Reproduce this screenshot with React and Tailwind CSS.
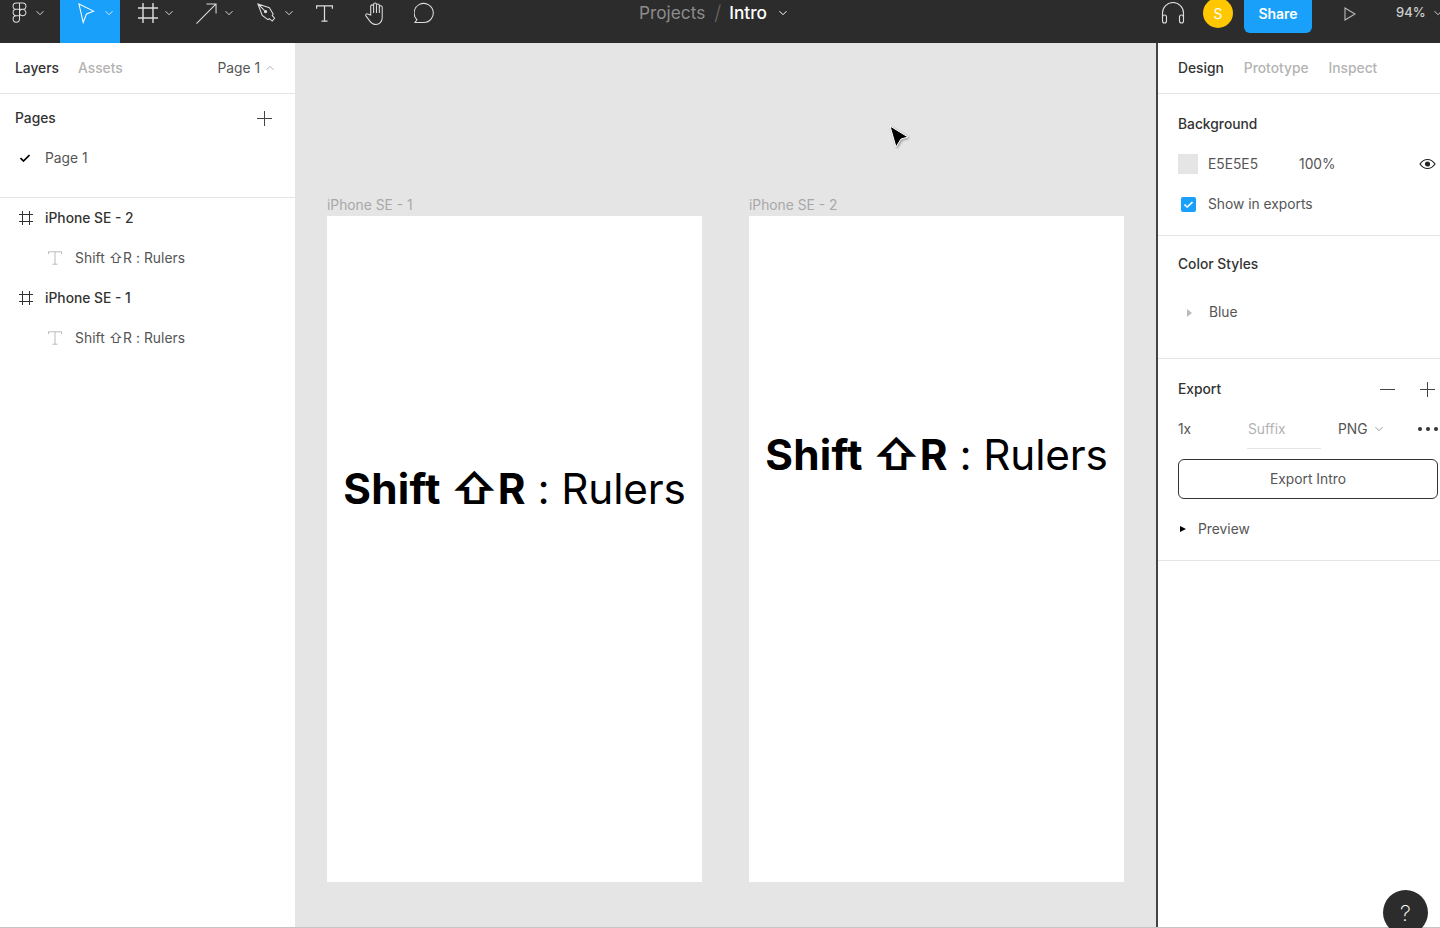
const Chevron = ({ className = 'text-white/80' }) => (
  <svg className={`w-2 h-2 shrink-0 ${className}`} viewBox="0 0 8 8" fill="none" stroke="currentColor" strokeWidth="1">
    <path d="M0.5 2.2 4 5.7 7.500 2.2" />
  </svg>
);

const FrameIcon = ({ className }) => (
  <svg className={className} viewBox="0 0 14 14" fill="none" stroke="currentColor" strokeWidth="1">
    <path d="M3.5 0v14M10.5 0v14M0 3.5h14M0 10.5h14" />
  </svg>
);

const TextIcon = ({ className }) => (
  <svg className={className} viewBox="0 0 14 14" fill="none" stroke="currentColor" strokeWidth="1">
    <path d="M.5 3V.8h13V3M7 .8v12.4M4.5 13.2h5" />
  </svg>
);

const Plus = ({ className = 'w-[15px] h-[15px] text-[#444]' }) => (
  <svg className={className} viewBox="0 0 15 15" fill="none" stroke="currentColor" strokeWidth="1">
    <path d="M7.5 0v15M0 7.5h15" />
  </svg>
);

const ToolButton = ({ className, active, children, chevron = true }) => (
  <div className={`h-full flex items-center pb-[17px] ${className} ${active ? 'bg-[#18a0fb]' : ''}`}>
    {children}
    {chevron && <Chevron className="text-white/80" />}
  </div>
);

const LayerRow = ({ name }) => (
  <>
    <div className="h-10 flex items-center pl-[19px] gap-[12px] text-[#333] font-medium">
      <FrameIcon className="w-[14px] h-[14px] text-[#333]" />
      <span>{name}</span>
    </div>
    <div className="h-10 flex items-center pl-[48px] gap-[13px] text-[#555]">
      <TextIcon className="w-[14px] h-[14px] text-[#bbb]" />
      <span className="tracking-[0.06px]">Shift ⇧R : Rulers</span>
    </div>
  </>
);

const Frame = ({ label, offset }) => (
  <div className="w-[375px] shrink-0">
    <div className="h-[20px] text-[#a8a8a8] text-[13.800px] leading-[18px]">{label}</div>
    <div className={`h-[666px] bg-white flex justify-center ${offset}`}>
      <div className="text-[42.300px] leading-[54px] text-black whitespace-nowrap tracking-[-0.15px]">
        <span className="font-bold tracking-[0.25px]">Shift ⇧R</span> : Rulers
      </div>
    </div>
  </div>
);

export default function App() {
  return (
    <div className="w-[1440px] h-[928px] overflow-hidden flex flex-col bg-white text-[13.800px] font-['Inter',sans-serif] relative">

      {/* Top bar */}
      <header className="h-[43px] shrink-0 bg-[#2c2c2c] flex items-center text-white">
        <ToolButton className="w-[60px] pl-[12px] gap-[9px]">
          <svg className="w-[15px] h-[22px] text-[#ddd]" viewBox="0 0 16 24" fill="none" stroke="currentColor" strokeWidth="1.1">
            <path d="M8 1H4.5a3.5 3.5 0 0 0 0 7H8zM8 1h3.5a3.5 3.5 0 0 1 0 7H8zM8 8H4.5a3.5 3.5 0 0 0 0 7H8zM8 11.5a3.5 3.5 0 1 0 7 0 3.5 3.5 0 0 0-7 0zM8 15H4.5A3.5 3.5 0 1 0 8 18.500z" />
          </svg>
        </ToolButton>
        <ToolButton active className="w-[60px] pl-[18px] gap-[10px]">
          <svg className="w-[17px] h-[21px] text-white" viewBox="0 0 18 22" fill="none" stroke="currentColor" strokeWidth="1.1">
            <path d="M1 1 16.5 8.5 9 11.5 5.5 20.5z" />
          </svg>
        </ToolButton>
        <ToolButton className="w-[60px] pl-[18px] gap-[7px]">
          <FrameIcon className="w-[20px] h-[20px] text-[#ddd]" />
        </ToolButton>
        <ToolButton className="w-[60px] pl-[16px] gap-[8px]">
          <svg className="w-[21px] h-[21px] text-[#ddd]" viewBox="0 0 22 22" fill="none" stroke="currentColor" strokeWidth="1.1">
            <path d="M.5 21.5 21 1M11 1h10v10" />
          </svg>
        </ToolButton>
        <ToolButton className="w-[60px] pl-[17px] gap-[9px]">
          <svg className="w-[19px] h-[20px] text-[#ddd]" viewBox="0 0 20 21" fill="none" stroke="currentColor" strokeWidth="1.1">
            <path d="M1 1 13 5l4 6.5-1 1.5 2.500 3-2.500 3-3-2.500-1.500 1L5.500 13zM1 1l7 7" />
            <circle cx="9" cy="9" r="1.200" fill="currentColor" />
          </svg>
        </ToolButton>
        <ToolButton className="w-[50px] pl-[16px]" chevron={false}>
          <TextIcon className="w-[17px] h-[17px] text-[#ddd]" />
        </ToolButton>
        <ToolButton className="w-[50px] pl-[14px]" chevron={false}>
          <svg className="w-[23px] h-[25px] text-[#ddd]" viewBox="0 0 24 25" fill="none" stroke="currentColor" strokeWidth="1.1">
            <path d="M7 14V5a1.500 1.500 0 0 1 3 0V3a1.500 1.500 0 0 1 3 0v1a1.500 1.500 0 0 1 3 0v2a1.500 1.500 0 0 1 3 0v11c0 4-3 7-6.500 7-3 0-4.500-1-6-3l-4.500-6c-1-1.500 1-3 2.500-1.800z" />
            <path d="M10 5v7M13 4v8M16 5v7" />
          </svg>
        </ToolButton>
        <ToolButton className="w-[50px] pl-[14px]" chevron={false}>
          <svg className="w-[22px] h-[22px] text-[#ddd]" viewBox="0 0 23 23" fill="none" stroke="currentColor" strokeWidth="1.1">
            <path d="M1 21.500h9a10 10 0 1 0-7-3z" />
          </svg>
        </ToolButton>

        <div className="ml-[189px] flex items-center text-[17.250px] pb-[17px] h-full">
          <span className="text-[#8c8c8c]">Projects</span>
          <span className="text-[#666] ml-[9px] mr-[8px] font-light text-[20px]">/</span>
          <span className="text-white font-medium">Intro</span>
          <Chevron className="text-white ml-[12px]" />
        </div>

        <div className="ml-auto flex items-center h-full">
          <svg className="w-[24px] h-[22px] text-[#ddd] mr-[18px] mb-[17px]" viewBox="0 0 24 22" fill="none" stroke="currentColor" strokeWidth="1.1">
            <path d="M1.500 16V11a10.500 10.500 0 0 1 21 0v5" />
            <rect x="1.500" y="13" width="4" height="8" rx="2" />
            <rect x="18.500" y="13" width="4" height="8" rx="2" />
          </svg>
          <div className="w-[30px] h-[30px] rounded-full bg-[#ffc700] flex items-center justify-center text-[14px] mb-[17px]">S</div>
          <div className="w-[68px] h-[33px] ml-[11px] self-start bg-[#18a0fb] rounded-b-[6px] flex items-center justify-center font-semibold text-[14px] pb-[6px]">Share</div>
          <svg className="w-[12px] h-[14px] text-[#bbb] ml-[32px] mb-[16px]" viewBox="0 0 12 14" fill="none" stroke="currentColor" strokeWidth="1.1">
            <path d="M1 1v12l10-6z" />
          </svg>
          <div className="ml-[40px] w-[44px] flex items-center gap-[8px] text-[13px] font-medium text-[#ccc] pb-[17px]">
            <span>94%</span>
            <Chevron className="text-[#ccc]" />
          </div>
        </div>
      </header>

      <div className="flex-1 min-h-0 flex border-b border-[#c4c4c4]">

        {/* Left panel */}
        <aside className="w-[295px] shrink-0 bg-white">
          <div className="h-[51px] flex items-center px-[15px] border-b border-[#e5e5e5]">
            <span className="font-medium text-[#333]">Layers</span>
            <span className="font-medium text-[#b3b3b3] ml-[19px]">Assets</span>
            <span className="ml-auto text-[#555]">Page 1</span>
            <Chevron className="text-[#b3b3b3] rotate-180 ml-[6px] mr-[6px]" />
          </div>
          <div className="h-[104px] border-b border-[#e5e5e5]">
            <div className="h-[48px] flex items-center justify-between pl-[15px] pr-[23px] font-medium text-[#333]">
              <span>Pages</span>
              <Plus />
            </div>
            <div className="h-[32px] flex items-center pl-[20px] gap-[15px] text-[#555]">
              <svg className="w-[10px] h-[8px] text-black" viewBox="0 0 10 8" fill="none" stroke="currentColor" strokeWidth="1.700">
                <path d="M.5 4 3.500 7 9.500 1" />
              </svg>
              <span>Page 1</span>
            </div>
          </div>
          <LayerRow name="iPhone SE - 2" />
          <LayerRow name="iPhone SE - 1" />
        </aside>

        {/* Canvas */}
        <main className="flex-1 bg-[#e5e5e5] flex gap-[47px] pl-[32px] pt-[153px] relative">
          <Frame label="iPhone SE - 1" offset="pt-[246px]" />
          <Frame label="iPhone SE - 2" offset="pt-[212px]" />
          <svg className="absolute left-[594px] top-[82px] w-[20px] h-[24px] drop-shadow-[1px_1px_1px_rgba(0,0,0,0.35)]" viewBox="0 0 20 24">
            <path d="M1 1 19 12l-7 2-5 8z" fill="#000" stroke="#fff" strokeWidth="1" />
          </svg>
        </main>

        {/* Right panel */}
        <aside className="w-[284px] shrink-0 bg-white border-l-2 border-[#444] text-[#444]">
          <div className="h-[51px] flex items-center gap-[20px] pl-[20px] border-b border-[#e5e5e5] font-medium text-[#b3b3b3]">
            <span className="text-[#333]">Design</span>
            <span>Prototype</span>
            <span>Inspect</span>
          </div>
          <section className="h-[142px] border-b border-[#e5e5e5] pl-[20px]">
            <div className="pt-[20px] leading-[20px] font-medium text-[#333]">Background</div>
            <div className="mt-[20px] flex items-center h-[20px] relative">
              <div className="w-[20px] h-[20px] bg-[#e5e5e5]" />
              <span className="ml-[10px] text-[#555]">E5E5E5</span>
              <span className="ml-[41px] text-[#555]">100%</span>
              <svg className="absolute right-[4px] w-[17px] h-[12px] text-[#222]" viewBox="0 0 17 12" fill="none" stroke="currentColor" strokeWidth="1.200">
                <path d="M1 6c2-3 4.500-4.500 7.500-4.500S14 3 16 6c-2 3-4.500 4.500-7.500 4.500S3 9 1 6z" />
                <circle cx="8.500" cy="6" r="2" fill="currentColor" />
              </svg>
            </div>
            <div className="mt-[20px] flex items-center h-[20px] pl-[3px]">
              <div className="w-[15px] h-[15px] rounded-[2px] bg-[#18a0fb] flex items-center justify-center">
                <svg className="w-[9px] h-[7px] text-white" viewBox="0 0 9 7" fill="none" stroke="currentColor" strokeWidth="1.600">
                  <path d="M.5 3.500 3.200 6 8.500 1" />
                </svg>
              </div>
              <span className="ml-[12px] text-[#555]">Show in exports</span>
            </div>
          </section>
          <section className="h-[123px] border-b border-[#e5e5e5] pl-[20px]">
            <div className="pt-[18px] leading-[20px] font-medium text-[#333]">Color Styles</div>
            <div className="mt-[28px] flex items-center h-[20px] pl-[9px] pt-[1px]">
              <span className="w-0 h-0 border-y-[4px] border-y-transparent border-l-[5px] border-l-[#bbb]" />
              <span className="ml-[17px] text-[#555]">Blue</span>
            </div>
          </section>
          <section className="h-[202px] border-b border-[#e5e5e5] pl-[20px]">
            <div className="pt-[20px] flex items-center justify-between pr-[5px] h-[40px]">
              <span className="font-medium text-[#333]">Export</span>
              <div className="flex items-center gap-[25px]">
                <div className="w-[15px] h-px bg-[#444]" />
                <Plus />
              </div>
            </div>
            <div className="mt-[10px] h-[40px] flex items-center text-[#555] relative">
              <span className="w-[69px]">1x</span>
              <span className="w-[74px] h-[36px] mt-[4px] leading-[32px] border-b border-[#e5e5e5] text-[#b3b3b3] pl-[1px]">Suffix</span>
              <span className="ml-[17px]">PNG</span>
              <Chevron className="text-[#999] ml-[7px]" />
              <div className="absolute right-[2px] flex gap-[4px]">
                <div className="w-[4px] h-[4px] rounded-full bg-[#333]" />
                <div className="w-[4px] h-[4px] rounded-full bg-[#333]" />
                <div className="w-[4px] h-[4px] rounded-full bg-[#333]" />
              </div>
            </div>
            <div className="mt-[10px] w-[260px] h-[40px] border border-[#333] rounded-[6px] flex items-center justify-center text-[#555]">Export Intro</div>
            <div className="mt-[10px] h-[40px] flex items-center pl-[2px] text-[#555]">
              <span className="w-0 h-0 border-y-[3.500px] border-y-transparent border-l-[6px] border-l-black" />
              <span className="ml-[12px]">Preview</span>
            </div>
          </section>
        </aside>
      </div>

      {/* Help button */}
      <div className="absolute left-[1383px] top-[890px] w-[45px] h-[45px] rounded-full bg-[#2c2c2c] flex items-center justify-center text-white text-[22px] font-extralight pt-[1px]">?</div>
    </div>
  );
}
